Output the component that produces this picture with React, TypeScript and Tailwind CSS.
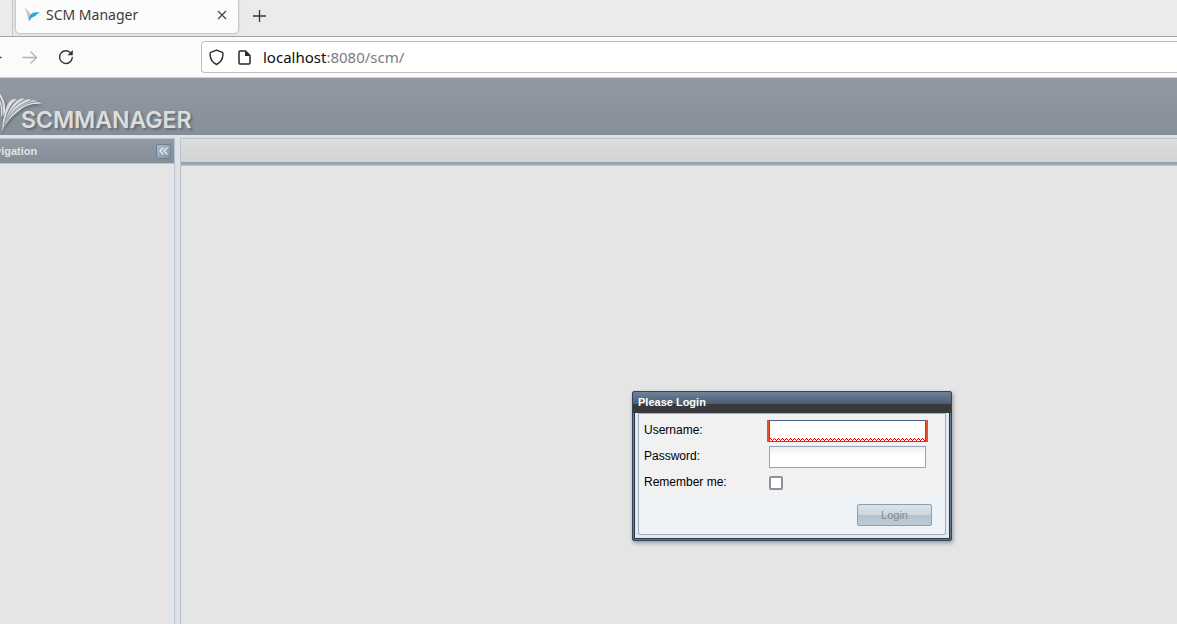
import { useState } from "react";

function SwallowIcon() {
  return (
    <svg width="16" height="14" viewBox="0 0 16 14" aria-hidden="true">
      <path d="M0 0C4 2 6.5 4 6.5 9L5 13.5C4 11 4 9 3 7C3 4 2 2 0 0Z" fill="#c3c6c8" />
      <path d="M5 13.5C4.500 6 8 3.500 16 4.500C14 5 14 6 12.500 6.500C12.500 8 10 8 9.500 9C7.500 9.500 6 11 5 13.500Z" fill="#2ba7df" />
    </svg>
  );
}

function TabBar() {
  return (
    <div className="flex h-[37px] items-start overflow-hidden border-b border-[#a3a3a5] bg-[#ebebec]">
      <div className="h-9 w-[13px] shrink-0 border-r border-[#c2c2c3]" />
      <div className="ml-[3px] flex h-[33px] w-[222px] shrink-0 items-center rounded-b bg-[#fbfbfb] pr-2.5 pb-1 pl-2 shadow-[0_0_3px_rgba(0,0,0,0.4)]">
        <SwallowIcon />
        <span className="ml-1.5 grow text-sm leading-5 text-[#3c3a40]">SCM Manager</span>
        <button aria-label="Close tab" className="flex size-3 items-center justify-center">
          <svg width="10" height="10" viewBox="0 0 10 10" fill="none" stroke="#3d3d40" strokeWidth="1.1">
            <path d="M1 1L9 9M9 1L1 9" />
          </svg>
        </button>
      </div>
      <button aria-label="New tab" className="ml-3.5 flex h-8 items-center">
        <svg width="14" height="14" viewBox="0 0 14 14" fill="none" stroke="#38383b" strokeWidth="1.3">
          <path d="M7.5 1V13M1 7H14" />
        </svg>
      </button>
    </div>
  );
}

function Toolbar() {
  return (
    <div className="flex h-[41px] items-center border-b border-[#cfd2d4] bg-[#fbfbfb]">
      <button aria-label="Back" className="flex w-[22px] items-center">
        <svg width="2" height="14" viewBox="0 0 2 14" stroke="#3d3d40" strokeWidth="1.3">
          <path d="M0 7.5H1.5" />
        </svg>
      </button>
      <button aria-label="Forward" className="flex w-9 items-center">
        <svg width="16" height="14" viewBox="0 0 16 14" fill="none" stroke="#b3b3b5" strokeWidth="1.3" strokeLinecap="round" strokeLinejoin="round">
          <path d="M1 7.5H14.5M9 2L14.5 7.5L9 13" />
        </svg>
      </button>
      <button aria-label="Reload" className="flex items-center">
        <svg width="16" height="16" viewBox="0 0 16 16" fill="none" stroke="#333336" strokeWidth="1.4">
          <path d="M14.3 8.5A6.4 6.4 0 1 1 12.8 4" strokeLinecap="round" />
          <path d="M14.8 1V6.3H9.5Z" fill="#333336" stroke="none" />
        </svg>
      </button>
      <div className="ml-[127px] flex h-8 grow items-center rounded-l border border-r-0 border-[#bfbfc2] bg-white pl-[7px]">
        <svg width="15" height="17" viewBox="0 0 15 17" fill="none" stroke="#28282b" strokeWidth="1.4" strokeLinejoin="round">
          <path d="M7.5 1.2L13.3 3.4C14 3.7 14 4 14 4.7C13.9 10 11.8 13.5 7.5 15.5C3.2 13.5 1.1 10 1 4.7C1 4 1 3.7 1.7 3.4Z" />
        </svg>
        <svg className="ml-3.5" width="13" height="15" viewBox="0 0 13 15" fill="none" stroke="#28282b" strokeWidth="1.5" strokeLinejoin="round">
          <path d="M2 1H7.5L12 5.5V13Q12 14 11 14H2Q1 14 1 13V2Q1 1 2 1Z" />
          <path d="M7 1V6H12Z" fill="#28282b" stroke="none" />
        </svg>
        <a href="#" className="ml-3 text-[15px] leading-5 text-[#7b7b80]">
          <span className="text-[#0e0e11]">localhost</span>:8080/scm/
        </a>
      </div>
    </div>
  );
}

function Header() {
  return (
    <header className="flex h-[57px] items-start bg-linear-to-b from-[#9199a3] to-[#868e97]">
      <svg
        className="mt-3.5 shrink-0 drop-shadow-[1px_2px_1px_rgba(60,65,72,0.5)]"
        width="42"
        height="42"
        viewBox="0 0 42 42"
        fill="#dcdee0"
        aria-hidden="true"
      >
        <path d="M0 2C3 5 6 12 5 20L3 24C3 16 3 9 0 5Z" />
        <path d="M0 8C2 12 3 18 2 25L1 24C1 18 1 14 0 12Z" />
        <path d="M2 39C3 27 5 15 10 9C12 7 14 7 17 7C9 13 6 22 4 33Z" />
        <path d="M4 33C7 21 11 13 18 8C20 7 22 6 25 7C15 12 9 20 5 31Z" />
        <path d="M5 31C10 19 16 12 25 8C28 7 30 7 32 8C21 12 13 18 7 29Z" />
        <path d="M7 29C14 17 21 12 32 8.500C34 8 36 9 37 9C26 11 16 17 9 27Z" />
        <path d="M2 39C4 33 7 28 13 22C20 15 28 10 38 10L42 12C31 11 25 14 19 19C11 25 6 31 2 39Z" />
        <path
          d="M4 33C7 21 11 12 18 7.500M5 31C10 19 16 11.500 25 7.500M7 29C13 18 20 12 32 8.500M8 27C15 17 24 11 37 9.500"
          fill="none"
          stroke="#8d959e"
          strokeWidth="0.7"
        />
      </svg>
      <span className="mt-7 -ml-[21px] font-[Inter,sans-serif] text-[23px] leading-7 font-semibold text-[#dcdddd] [text-shadow:2px_2px_2px_rgba(70,75,82,0.5)]">
        SCMMANAGER
      </span>
    </header>
  );
}

function Navigation() {
  return (
    <aside className="w-[175px] shrink-0 overflow-hidden border-t border-r border-[#b6c2d0]">
      <div className="flex h-[25px] items-center justify-between border-b border-[#b6c2d0] bg-linear-to-b from-[#929aa5] to-[#858d97] pr-[3px]">
        <h2 className="-ml-[19px] text-[11px] leading-4 font-bold text-[#e2e4e6]">Navigation</h2>
        <button
          aria-label="Collapse navigation"
          className="flex size-[15px] items-center justify-center rounded-xs border border-[#6e8093] bg-linear-to-br from-[#b4bdc8] to-[#8090a1]"
        >
          <svg width="9" height="8" viewBox="0 0 9 8" fill="none" stroke="#eef1f4" strokeWidth="1.3">
            <path d="M4.5 0.5L1 4L4.5 7.5M8.5 0.5L5 4L8.5 7.5" />
          </svg>
        </button>
      </div>
    </aside>
  );
}

function LoginDialog() {
  const [username, setUsername] = useState("");
  const [password, setPassword] = useState("");
  const [remember, setRemember] = useState(false);

  return (
    <div
      role="dialog"
      aria-labelledby="login-title"
      className="absolute top-[252px] left-[451px] w-80 rounded-xs border border-[#34455a] bg-[#5d7690] px-px pb-px shadow-[1px_2px_4px_rgba(0,0,0,0.35)]"
    >
      <div className="-mx-px h-[21px] rounded-t-xs bg-[linear-gradient(#6d839b,#4c5d70_12px,#37393d_12px)] px-[5px]">
        <h2 id="login-title" className="text-[11px] leading-5 font-bold text-white">
          Please Login
        </h2>
      </div>
      <form
        onSubmit={(e) => e.preventDefault()}
        className="border border-t-0 border-[#25364f] bg-[#e4e9ee] px-[3px] pb-[3px] text-xs text-black"
      >
        <div className="rounded-b-xs border border-[#a4adb8] bg-[#eef3f8]">
          <div className="mx-[5px] flex flex-col gap-1 bg-[#f1f1f1] pt-1.5 pb-0.5">
            <div className="flex h-[22px] items-start">
              <label htmlFor="username" className="w-[123px] leading-5">Username:</label>
              <div className="relative h-[22px] border-x-2 border-[#e8502a]">
                <input
                  id="username"
                  type="text"
                  value={username}
                  onChange={(e) => setUsername(e.target.value)}
                  className="block h-[22px] w-[157px] border border-[#46658b] bg-white px-1 outline-none"
                />
                <svg className="pointer-events-none absolute bottom-px left-px" width="155" height="3" aria-hidden="true">
                  <defs>
                    <pattern id="wave" width="4" height="3" patternUnits="userSpaceOnUse">
                      <path d="M0 0H1V1H0ZM1 1H2V2H1ZM2 2H3V3H2ZM3 1H4V2H3Z" fill="#f00000" shapeRendering="crispEdges" />
                    </pattern>
                  </defs>
                  <rect width="155" height="3" fill="url(#wave)" />
                </svg>
              </div>
            </div>
            <div className="flex h-[22px] items-start">
              <label htmlFor="password" className="w-[125px] leading-5">Password:</label>
              <input
                id="password"
                type="password"
                value={password}
                onChange={(e) => setPassword(e.target.value)}
                className="h-[22px] w-[157px] border border-[#96a5b6] bg-[linear-gradient(#eceeee,#ffffff_9px)] px-1 outline-none"
              />
            </div>
            <div className="flex h-[22px] items-start">
              <label htmlFor="remember" className="w-[125px] leading-5">Remember me:</label>
              <input
                id="remember"
                type="checkbox"
                checked={remember}
                onChange={(e) => setRemember(e.target.checked)}
                className="mt-1 size-3.5 appearance-none rounded-xs border-2 border-[#8f8f9d] bg-white checked:bg-[#46658b]"
              />
            </div>
          </div>
          <div className="flex justify-end pt-2 pr-[13px] pb-2">
            <button
              type="submit"
              disabled
              className="h-[22px] w-[75px] rounded-xs border border-[#8ba0b5] bg-[linear-gradient(#dbe3e9,#ccd6de_50%,#b2c2cf_50%,#bccbd7)] text-[11px] text-[#86898d]"
            >
              Login
            </button>
          </div>
        </div>
      </form>
    </div>
  );
}

export default function App() {
  return (
    <div className="flex min-h-screen flex-col overflow-hidden bg-[#e5e5e5] font-['Liberation_Sans',Arial,sans-serif]">
      <div className="font-['Noto_Sans',sans-serif]">
        <TabBar />
        <Toolbar />
      </div>
      <Header />
      <div className="flex grow bg-[#dfe1e2] pt-[3px]">
        <div className="flex bg-[#e5e5e5]">
          <Navigation />
        </div>
        <main className="relative ml-[5px] min-h-[420px] grow border-t border-l border-[#b6c2d0] bg-[#e5e5e5]">
          <div className="h-[27px] border-b border-[#b9c4cf] bg-[linear-gradient(#dcdedd,#d1d4d3_23px,#8b9cae_23px,#9fb0c0)]" />
          <LoginDialog />
        </main>
      </div>
    </div>
  );
}
